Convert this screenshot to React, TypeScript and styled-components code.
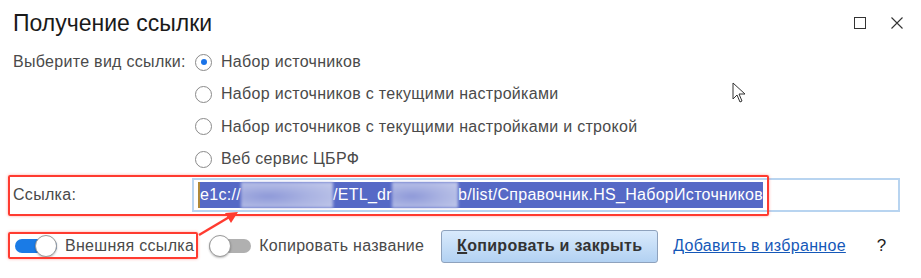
import styled, { createGlobalStyle } from "styled-components";

// #5669c6 (selection)
// #b8d4f0 (field border)
// #ff3b30 (annotation)

const Global = createGlobalStyle`
  html, body {
    margin: 0;
    padding: 0;
    background: #fff;
  }
  body {
    font-family: "Liberation Sans", Arial, sans-serif;
    color: #4a4a4a;
    letter-spacing: 0.3px;
  }
`;

const Window = styled.div`
  position: relative;
  width: 921px;
  height: 278px;
  overflow: hidden;
  background: #fff;
  box-sizing: border-box;
  padding: 0 13px;
`;

const TitleBar = styled.div`
  display: flex;
  align-items: center;
  height: 46px;
  box-sizing: border-box;
`;

const Title = styled.div`
  flex: 1;
  font-size: 23px;
  letter-spacing: 0;
  color: #1a1a1a;
`;

const WinButtons = styled.div`
  display: flex;
  align-items: center;
  gap: 25px;
  margin-right: 5px;
`;

const Form = styled.div`
  display: grid;
  grid-template-columns: 179px 1fr;
  align-items: start;
`;

const Label = styled.div<{ $h: number }>`
  height: ${(p) => p.$h}px;
  display: flex;
  align-items: center;
  font-size: 16px;
  color: #4a4a4a;
  white-space: nowrap;
`;

const RadioList = styled.div`
  display: flex;
  flex-direction: column;
`;

const RadioRow = styled.div`
  height: 32.3px;
  display: flex;
  align-items: center;
  gap: 9px;
  padding-left: 3px;
  font-size: 16px;
  color: #4a4a4a;
`;

const RadioCircle = styled.span<{ $on?: boolean }>`
  width: 17px;
  height: 17px;
  box-sizing: border-box;
  border-radius: 50%;
  border: 1px solid #8a8a8a;
  display: flex;
  align-items: center;
  justify-content: center;
  background: #fff;
  &::after {
    content: "";
    width: 6px;
    height: 6px;
    border-radius: 50%;
    background: ${(p) => (p.$on ? "#1a73e8" : "transparent")};
  }
`;

const LinkRow = styled.div`
  display: grid;
  grid-template-columns: 179px 1fr;
  align-items: center;
  margin-top: 3px;
`;

const Field = styled.div`
  height: 34px;
  box-sizing: border-box;
  border: 2px solid #b8d4f0;
  padding: 2px 4px;
  display: flex;
  align-items: center;
  margin-right: 8px;
`;

const Selection = styled.div`
  display: flex;
  align-items: center;
  height: 26px;
  background: #5669c6;
  color: #fff;
  font-size: 16px;
  white-space: nowrap;
  border-left: 2px solid #b08a3a;
`;

const Blur = styled.span<{ $w: number }>`
  display: inline-block;
  width: ${(p) => p.$w}px;
  height: 26px;
  background: radial-gradient(ellipse at 30% 55%, #8e99d8 0%, #aab3e2 45%, #c4cbeb 100%);
  filter: blur(1.5px);
`;

const BottomRow = styled.div`
  display: flex;
  align-items: center;
  height: 34px;
  margin-top: 17px;
  padding-left: 2px;
`;

const ToggleWrap = styled.div<{ $gap?: number }>`
  display: flex;
  align-items: center;
  gap: 8px;
  margin-left: ${(p) => p.$gap ?? 0}px;
  font-size: 16px;
  color: #4a4a4a;
  white-space: nowrap;
`;

const Track = styled.span<{ $on?: boolean }>`
  position: relative;
  width: 42px;
  height: 22px;
  display: flex;
  align-items: center;
  &::before {
    content: "";
    position: absolute;
    left: 0;
    right: 0;
    top: 4px;
    height: 14px;
    border-radius: 7px;
    background: ${(p) => (p.$on ? "#1a7be6" : "#b0b0b0")};
  }
  &::after {
    content: "";
    position: absolute;
    top: 0;
    ${(p) => (p.$on ? "right: 0;" : "left: 0;")}
    width: 20px;
    height: 20px;
    border-radius: 50%;
    background: #fff;
    border: 1px solid #9a9a9a;
    box-shadow: 0 1px 2px rgba(0, 0, 0, 0.25);
  }
`;

const Button = styled.button`
  margin-left: 17px;
  width: 217px;
  height: 33px;
  flex-shrink: 0;
  border: 1px solid #8ea2bd;
  border-radius: 3px;
  background: linear-gradient(#d9eafc, #b2d1f2);
  font-family: "Liberation Sans", Arial, sans-serif;
  font-weight: bold;
  font-size: 16px;
  letter-spacing: 0.3px;
  color: #333;
  padding: 0;
  u {
    text-decoration-thickness: 2px;
  }
`;

const Link = styled.a`
  margin-left: 15px;
  font-size: 16px;
  color: #1558b8;
  text-decoration: underline;
  white-space: nowrap;
`;

const Help = styled.span`
  margin-left: 31px;
  font-size: 17px;
  color: #222;
`;

const Annotation = styled.div<{ $x: number; $y: number; $w: number; $h: number }>`
  position: absolute;
  left: ${(p) => p.$x}px;
  top: ${(p) => p.$y}px;
  width: ${(p) => p.$w}px;
  height: ${(p) => p.$h}px;
  box-sizing: border-box;
  border: 2px solid #ff3b30;
  border-radius: 2px;
  box-shadow: 0 0 3px rgba(255, 59, 48, 0.45);
  pointer-events: none;
`;

const Overlay = styled.svg`
  position: absolute;
  left: 0;
  top: 0;
  pointer-events: none;
`;

const options = [
  "Набор источников",
  "Набор источников с текущими настройками",
  "Набор источников с текущими настройками и строкой",
  "Веб сервис ЦБРФ",
];

export default function App() {
  return (
    <Window>
      <Global />
      <TitleBar>
        <Title>Получение ссылки</Title>
        <WinButtons>
          <svg width="12" height="12" viewBox="0 0 12 12">
            <rect x="0.5" y="0.5" width="11" height="11" fill="none" stroke="#333" strokeWidth="1" />
          </svg>
          <svg width="12" height="12" viewBox="0 0 12 12">
            <path d="M0.5 0.5L11.5 11.5M11.5 0.5L0.5 11.5" stroke="#333" strokeWidth="1.1" />
          </svg>
        </WinButtons>
      </TitleBar>
      <Form>
        <Label $h={32}>Выберите вид ссылки:</Label>
        <RadioList>
          {options.map((o, i) => (
            <RadioRow key={o}>
              <RadioCircle $on={i === 0} />
              {o}
            </RadioRow>
          ))}
        </RadioList>
      </Form>
      <LinkRow>
        <Label $h={34}>Ссылка:</Label>
        <Field>
          <Selection>
            e1c://
            <Blur $w={92} />
            /ETL_dr
            <Blur $w={66} />
            b/list/Справочник.HS_НаборИсточников
          </Selection>
        </Field>
      </LinkRow>
      <BottomRow>
        <ToggleWrap>
          <Track $on />
          Внешняя ссылка
        </ToggleWrap>
        <ToggleWrap $gap={15}>
          <Track />
          Копировать название
        </ToggleWrap>
        <Button>
          <u>К</u>опировать и закрыть
        </Button>
        <Link>Добавить в избранное</Link>
        <Help>?</Help>
      </BottomRow>

      <Annotation $x={8} $y={175} $w={761} $h={41} />
      <Annotation $x={8} $y={232} $w={190} $h={27} />
      <Overlay width="921" height="278">
        <path d="M199 235L231 216" stroke="#ff3b30" strokeWidth="2.5" />
        <path d="M238 212L225 213L231 223Z" fill="#ff3b30" />
        <path
          d="M733 83L733 99L737 95L740 102L742 101L739 94L745 94Z"
          fill="#fff"
          stroke="#333"
          strokeWidth="1"
        />
      </Overlay>
    </Window>
  );
}
